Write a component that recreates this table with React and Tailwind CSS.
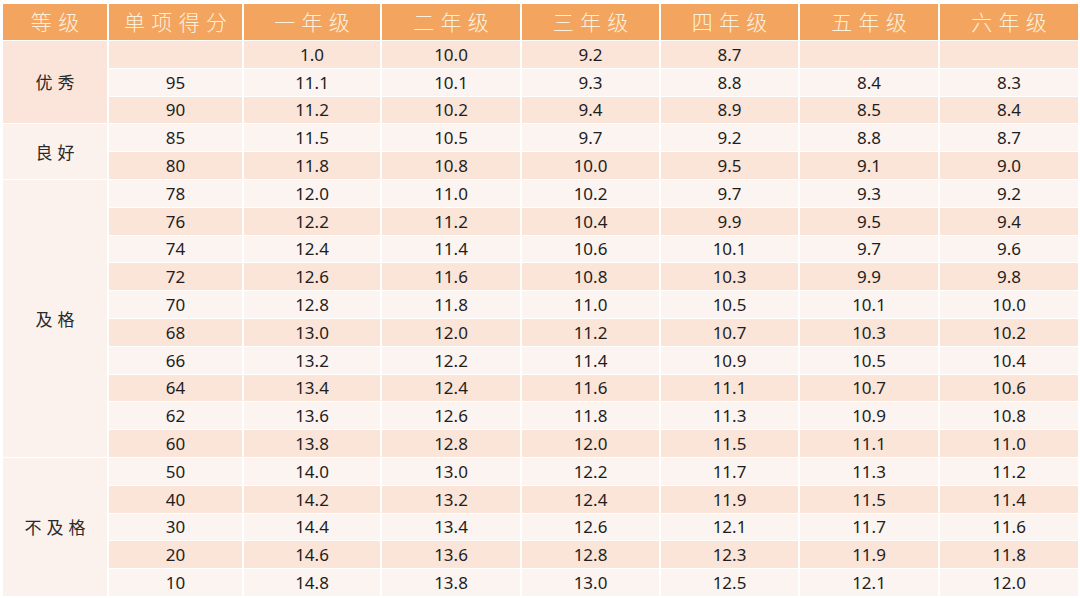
const headers = ["等级", "单项得分", "一年级", "二年级", "三年级", "四年级", "五年级", "六年级"];

// score, grade1..grade6
const rows = [
  ["", "1.0", "10.0", "9.2", "8.7", "", ""],
  ["95", "11.1", "10.1", "9.3", "8.8", "8.4", "8.3"],
  ["90", "11.2", "10.2", "9.4", "8.9", "8.5", "8.4"],
  ["85", "11.5", "10.5", "9.7", "9.2", "8.8", "8.7"],
  ["80", "11.8", "10.8", "10.0", "9.5", "9.1", "9.0"],
  ["78", "12.0", "11.0", "10.2", "9.7", "9.3", "9.2"],
  ["76", "12.2", "11.2", "10.4", "9.9", "9.5", "9.4"],
  ["74", "12.4", "11.4", "10.6", "10.1", "9.7", "9.6"],
  ["72", "12.6", "11.6", "10.8", "10.3", "9.9", "9.8"],
  ["70", "12.8", "11.8", "11.0", "10.5", "10.1", "10.0"],
  ["68", "13.0", "12.0", "11.2", "10.7", "10.3", "10.2"],
  ["66", "13.2", "12.2", "11.4", "10.9", "10.5", "10.4"],
  ["64", "13.4", "12.4", "11.6", "11.1", "10.7", "10.6"],
  ["62", "13.6", "12.6", "11.8", "11.3", "10.9", "10.8"],
  ["60", "13.8", "12.8", "12.0", "11.5", "11.1", "11.0"],
  ["50", "14.0", "13.0", "12.2", "11.7", "11.3", "11.2"],
  ["40", "14.2", "13.2", "12.4", "11.9", "11.5", "11.4"],
  ["30", "14.4", "13.4", "12.6", "12.1", "11.7", "11.6"],
  ["20", "14.6", "13.6", "12.8", "12.3", "11.9", "11.8"],
  ["10", "14.8", "13.8", "13.0", "12.5", "12.1", "12.0"],
];

// grade label cells, merged over several rows
const grades = [
  { label: "优秀", start: 0, cls: "row-span-3 bg-[#fbe5da]" },
  { label: "良好", start: 3, cls: "row-span-2 bg-[#fcf2ed]" },
  { label: "及格", start: 5, cls: "row-span-10 bg-[#fcf2ed]" },
  { label: "不及格", start: 15, cls: "row-span-5 bg-[#fcf2ed]" },
];

export default function App() {
  return (
    <div className="w-[1080px] h-[598px] overflow-hidden bg-white pt-[4px] pl-[3px] font-['Noto_Sans','Noto_Sans_CJK_SC',sans-serif]">
      <div className="grid grid-cols-[104px_133px_136px_138px_137px_137px_138px_138px] grid-rows-[36px_repeat(20,26.8px)] gap-x-[2px] gap-y-px w-[1075px]">
        {/* ── Header ── */}
        {headers.map((h) => (
          <div
            key={h}
            className="bg-[#f3a45f] flex items-center justify-center pl-[0.3em] text-[21px] font-light tracking-[0.3em] text-[#fdf1dc] font-['Noto_Sans_CJK_SC',sans-serif]"
          >
            {h}
          </div>
        ))}

        {/* ── Body ── */}
        {rows.map((r, i) => {
          const grade = grades.find((g) => g.start === i);
          const bg = i % 2 === 0 ? "bg-[#fbe4d8]" : "bg-[#fcf4f0]";
          return [
            grade && (
              <div
                key={"g" + i}
                className={`${grade.cls} flex items-center justify-center pl-[0.3em] text-[17px] tracking-[0.3em] text-[#2a2a2a] font-['Noto_Sans_CJK_SC',sans-serif]`}
              >
                {grade.label}
              </div>
            ),
            ...r.map((v, j) => (
              <div
                key={i + "-" + j}
                className={`${bg} flex items-center justify-center text-[17px] leading-none text-[#1e1e1e]`}
              >
                {v}
              </div>
            )),
          ];
        })}
      </div>
    </div>
  );
}
